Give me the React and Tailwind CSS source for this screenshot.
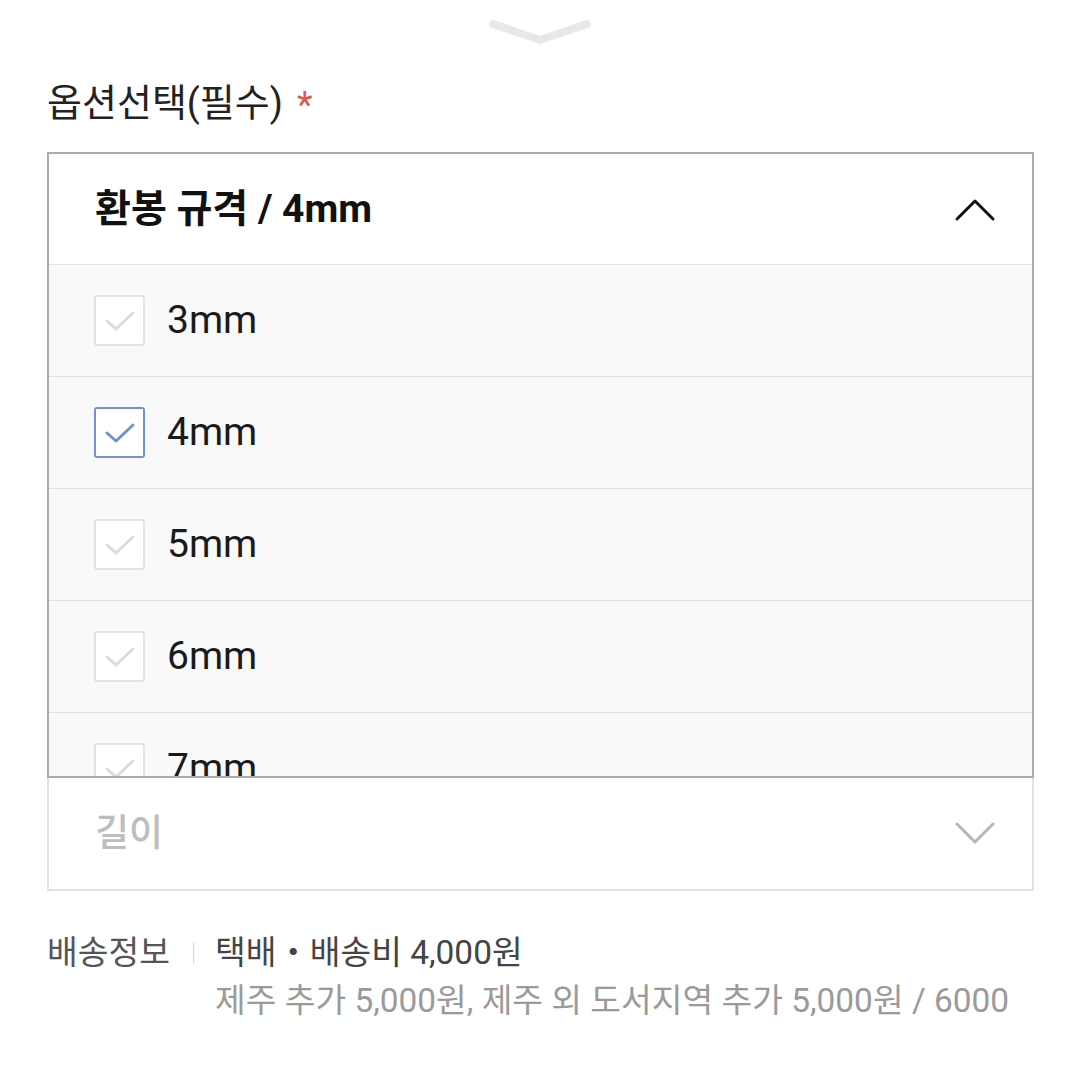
import React from "react";

const items = ["3mm", "4mm", "5mm", "6mm", "7mm", "8mm"];

function Check({ checked }) {
  return (
    <div
      className={
        "w-[51px] h-[51px] rounded-[3px] border-2 flex items-center justify-center bg-white " +
        (checked ? "border-[#7093d1]" : "border-[#e3e3e3]")
      }
    >
      <svg width="30" height="22" viewBox="0 0 30 22" fill="none">
        <path
          d="M2 11 L11 19 L28 3"
          stroke={checked ? "#6f91d0" : "#dcdcdc"}
          strokeWidth="3"
          strokeLinecap="round"
          strokeLinejoin="round"
        />
      </svg>
    </div>
  );
}

export default function App() {
  return (
    <div
      className="w-[1080px] h-[1074px] bg-white overflow-hidden"
      style={{ fontFamily: "Roboto, 'Noto Sans CJK KR', sans-serif" }}
    >
      <div className="flex justify-center pt-[18px] h-[50px]">
        <svg width="106" height="30" viewBox="0 0 106 30" fill="none">
          <path
            d="M6 6 L53 22 L100 6"
            stroke="#e8e8e8"
            strokeWidth="8"
            strokeLinecap="round"
            strokeLinejoin="round"
          />
        </svg>
      </div>
      <div className="pl-[47px] pr-[46px]">
        <div className="h-[102px] flex items-center pt-[4px] text-[38px] text-[#222] tracking-[0px]">
          옵션선택(필수)
          <span className="ml-[14px] text-[#e0584c] text-[36px] mt-[4px]">*</span>
        </div>
        <div className="border-2 border-[#ababab]">
          <div className="h-[111px] flex items-center justify-between pl-[46px] pr-[36px] border-b border-[#e4e4e4] bg-white">
            <span className="text-[39px] font-bold text-[#111]">환봉 규격 / 4mm</span>
            <svg width="42" height="28" viewBox="0 0 42 28" fill="none">
              <path d="M3 24 L21 6 L39 24" stroke="#111" strokeWidth="3" strokeLinecap="round" strokeLinejoin="round" />
            </svg>
          </div>
          <div className="h-[511px] overflow-hidden bg-[#f9f9f9]">
            {items.map((t, i) => (
              <div key={t} className="h-[112px] flex items-center pl-[45px] border-b border-[#e0e0e0]">
                <Check checked={i === 1} />
                <span className="ml-[22px] text-[39px] text-[#1a1a1a]">{t}</span>
              </div>
            ))}
          </div>
        </div>
        <div className="h-[113px] border-2 border-t-0 border-[#e2e2e2] flex items-center justify-between pl-[46px] pr-[36px]">
          <span className="text-[37px] font-medium text-[#bdbdbd]">길이</span>
          <svg width="42" height="28" viewBox="0 0 42 28" fill="none">
            <path d="M3 4 L21 22 L39 4" stroke="#b5b5b5" strokeWidth="3" strokeLinecap="round" strokeLinejoin="round" />
          </svg>
        </div>
        <div className="mt-[38px] flex text-[33.4px] leading-[48px]">
          <div className="w-[125px] text-[#555] flex-none">배송정보</div>
          <div className="w-[43px] h-[48px] flex items-center justify-center flex-none">
            <div className="w-[1px] h-[22px] bg-[#d8d8d8]" />
          </div>
          <div>
            <div className="text-[#444]">택배・배송비 4,000원</div>
            <div className="text-[#9a9a9a]">제주 추가 5,000원, 제주 외 도서지역 추가 5,000원 / 6000</div>
          </div>
        </div>
      </div>
    </div>
  );
}
